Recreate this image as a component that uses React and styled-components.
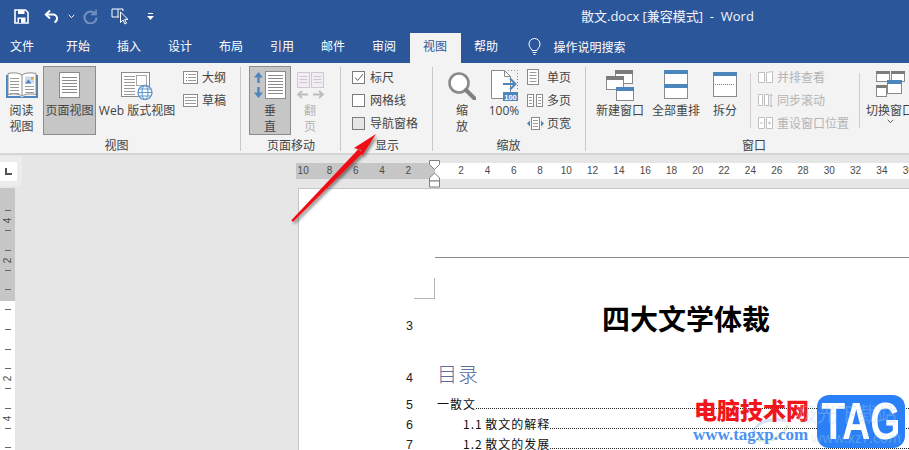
import React from 'react';
import styled, { createGlobalStyle } from 'styled-components';

const UI_FONT = `"Open Sans", "Noto Sans CJK SC", sans-serif`;

const GlobalStyle = createGlobalStyle`
  html, body { margin: 0; padding: 0; height: 100%; overflow: hidden; background: #e6e6e6; }
  * { box-sizing: border-box; }
`;

const Screen = styled.div`
  position: relative;
  width: 909px;
  height: 450px;
  overflow: hidden;
  display: flex;
  flex-direction: column;
  font-family: ${UI_FONT};
  background: #e6e6e6;
`;

/* title bar */
const TitleBar = styled.div`
  height: 33px;
  background: #2b579a;
  color: #fff;
  display: flex;
  align-items: center;
  padding-left: 14px;
`;
const Qat = styled.div`
  width: 567px;
  display: flex;
  align-items: center;
`;
const QatSlot = styled.span`
  display: flex;
  width: ${p => p.$w}px;
  opacity: ${p => (p.$off ? 0.35 : 1)};
`;
const DocTitle = styled.div`
  font-size: 13px;
  white-space: pre;
  color: #f4f6fa;
  margin-top: -3px;
`;

const TabBar = styled.div`
  height: 30px;
  background: #2b579a;
  display: flex;
`;
const Tab = styled.div`
  width: ${p => p.$w || 51}px;
  margin-right: ${p => p.$mr || 0}px;
  text-align: center;
  font-size: 12px;
  line-height: 28px;
  color: ${p => (p.$active ? '#2b579a' : '#fff')};
  background: ${p => (p.$active ? '#f3f3f3' : 'transparent')};
`;
const TellMe = styled.div`
  display: flex;
  align-items: center;
  height: 28px;
  margin-left: 16px;
  gap: 13px;
  color: #fff;
  font-size: 12px;
`;

/* ribbon */
const Ribbon = styled.div`
  height: 92px;
  background: #f3f3f3;
  border-bottom: 2px solid #d6d6d6;
  display: flex;
  flex: none;
`;
const Group = styled.div`
  width: ${p => p.$w}px;
  flex: none;
  display: flex;
  flex-direction: column;
  position: relative;
  &::after {
    content: '';
    position: absolute;
    right: 0;
    top: 4px;
    bottom: 2px;
    width: 1px;
    background: ${p => (p.$last ? 'transparent' : '#c8c8c8')};
  }
`;
const GroupBody = styled.div`
  height: 74px;
  padding: 3px 0 0 ${p => p.$pl || 0}px;
  display: flex;
`;
const GroupLabel = styled.div`
  height: 16px;
  text-align: center;
  font-size: 12px;
  line-height: 18px;
  color: #444;
  padding-right: ${p => p.$pr || 0}px;
`;
const Large = styled.div`
  width: ${p => p.$w}px;
  margin-left: ${p => p.$ml || 0}px;
  height: 69px;
  flex: none;
  display: flex;
  flex-direction: column;
  align-items: center;
  font-size: 12px;
  line-height: 16px;
  white-space: nowrap;
  text-align: center;
  color: ${p => (p.$off ? '#b4b4b4' : '#444')};
  background: ${p => (p.$on ? '#c6c6c6' : 'transparent')};
  outline: ${p => (p.$on ? '1px solid #8c8c8c' : 'none')};
  outline-offset: -1px;
`;
const LargeIcon = styled.div`
  height: 37px;
  padding-top: ${p => p.$pt ?? 5}px;
  display: flex;
  justify-content: center;
  flex: none;
`;
const Stack = styled.div`
  margin-left: ${p => p.$ml || 0}px;
  display: flex;
  flex-direction: column;
  padding-top: 3px;
  gap: 7px;
  flex: none;
`;
const SmallRow = styled.div`
  height: 16px;
  display: flex;
  align-items: center;
  font-size: 12px;
  white-space: nowrap;
  color: ${p => (p.$off ? '#b4b4b4' : '#444')};
`;
const SmallIcon = styled.span`
  width: ${p => p.$w}px;
  flex: none;
  display: flex;
`;
const CheckBox = styled.span`
  width: 13px;
  height: 13px;
  flex: none;
  margin-right: 5px;
  border: 1px solid #7c7c7c;
  background: ${p => (p.$grey ? '#e6e6e6' : '#fff')};
  display: flex;
  align-items: center;
  justify-content: center;
`;
const InnerSep = styled.div`
  width: 1px;
  height: 55px;
  margin: 7px 0 0 ${p => p.$ml}px;
  background: #d0d0d0;
  flex: none;
`;

/* work area */
const Work = styled.div`
  flex: 1;
  min-height: 0;
  display: flex;
  flex-direction: column;
`;
const RulerRow = styled.div`
  height: 33px;
  display: flex;
  flex: none;
`;
const CornerWrap = styled.div`
  width: 22px;
  height: 30px;
  margin-top: 1px;
  background: #ececec;
  padding-top: 6px;
  flex: none;
`;
const Corner = styled.div`
  width: 17px;
  height: 19px;
  background: #fff;
  display: flex;
  align-items: center;
  justify-content: center;
`;
const HRuler = styled.div`
  margin: 8px 0 0 274px;
  height: 16px;
  flex: 1;
  display: flex;
  position: relative;
  font-size: 10px;
  color: #4a4a4a;
  font-family: "Liberation Sans", sans-serif;
`;
const HRulerPart = styled.div`
  height: 16px;
  display: flex;
  flex: ${p => (p.$grey ? 'none' : 1)};
  width: ${p => (p.$grey ? '139px' : 'auto')};
  justify-content: ${p => (p.$grey ? 'flex-end' : 'flex-start')};
  background: ${p => (p.$grey ? '#c6c6c6' : '#fff')};
  padding: ${p => (p.$grey ? '0 13.5px 0 0' : '0 0 0 13px')};
  overflow: hidden;
`;
const HCell = styled.span`
  flex: none;
  width: 26.3px;
  text-align: center;
  line-height: 16px;
`;
const Indent = styled.svg`
  position: absolute;
  left: 132px;
  top: -3px;
`;
const Main = styled.div`
  flex: 1;
  min-height: 0;
  display: flex;
`;
const VRuler = styled.div`
  width: 15px;
  flex: none;
  display: flex;
  flex-direction: column;
  background: linear-gradient(#c6c6c6 0, #c6c6c6 113px, #fff 113px);
  padding-top: 9px;
  font-family: "Liberation Sans", sans-serif;
  font-size: 10px;
  color: #4a4a4a;
`;
const VCell = styled.div`
  height: 39.5px;
  flex: none;
  display: flex;
  flex-direction: column;
  align-items: center;
  padding-top: 13px;
  &::before, &::after {
    content: '';
    width: 6px;
    height: 1px;
    background: #666;
    flex: none;
  }
`;
const VNum = styled.span`
  height: 19px;
  line-height: 19px;
  transform: rotate(-90deg);
  flex: none;
`;
const Desk = styled.div`
  width: 283px;
  flex: none;
`;
const Page = styled.div`
  flex: 1;
  min-width: 0;
  background: #fff;
  border-left: 1px solid #c6c6c6;
  border-top: 1px solid #c6c6c6;
  overflow: hidden;
`;
const HeaderRule = styled.div`
  height: 1px;
  margin: 68px 0 0 136px;
  background: #8a8a8a;
`;
const CropMark = styled.div`
  width: 21px;
  height: 21px;
  margin: 20px 0 0 115px;
  border-right: 1px solid #b4b4b4;
  border-bottom: 1px solid #b4b4b4;
`;
const Line = styled.div`
  display: flex;
  align-items: baseline;
  padding-left: 105px;
  margin-top: ${p => p.$mt || 0}px;
  height: ${p => p.$h}px;
  width: 640px;
`;
const LineNo = styled.span`
  width: 33px;
  flex: none;
  padding-left: 2px;
  font-family: "Liberation Sans", sans-serif;
  font-size: 12.5px;
  color: #222;
`;
const DocTitleText = styled.span`
  width: 498px;
  text-align: center;
  font-family: "Noto Sans CJK SC", sans-serif;
  font-weight: 700;
  font-size: 28px;
  line-height: 34px;
  color: #000;
`;
const TocHeading = styled.span`
  font-family: "Noto Sans CJK SC", sans-serif;
  font-weight: 300;
  font-size: 20px;
  letter-spacing: 1px;
  line-height: 28px;
  color: #5b6f9e;
`;
const TocText = styled.span`
  font-family: "Noto Sans CJK SC", sans-serif;
  font-size: 12px;
  letter-spacing: 1px;
  word-spacing: -1px;
  line-height: 20px;
  color: #111;
  padding-left: ${p => p.$indent || 0}px;
  white-space: nowrap;
`;
const Leader = styled.span`
  flex: 1;
  border-bottom: 1px dotted #222;
  height: 1px;
  align-self: flex-end;
  margin-bottom: 5px;
`;

/* overlays */
const ArrowSvg = styled.svg`
  position: absolute;
  left: 280px;
  top: 120px;
  pointer-events: none;
`;
const Mark = styled.div`
  position: absolute;
  left: 693px;
  top: 395px;
  width: 216px;
  height: 55px;
`;
const MarkRed = styled.div`
  position: absolute;
  left: 1px;
  top: 1px;
  font-family: "Noto Sans CJK SC", sans-serif;
  font-weight: 900;
  font-size: 23px;
  line-height: 26px;
  color: #f0161c;
  white-space: nowrap;
`;
const MarkUrl = styled.div`
  position: absolute;
  left: 0;
  top: 30px;
  font-family: "Liberation Serif", serif;
  font-weight: 700;
  font-size: 17px;
  line-height: 20px;
  color: #4a92f0;
  white-space: nowrap;
`;
const MarkGhost = styled.div`
  position: absolute;
  left: ${p => p.$left}px;
  top: ${p => p.$top}px;
  font-family: "Noto Sans CJK SC", sans-serif;
  font-size: ${p => p.$size}px;
  line-height: 22px;
  color: ${p => p.$c};
  opacity: 0.32;
  white-space: nowrap;
`;
const GhostSwirl = styled.svg`
  position: absolute;
  left: 57px;
  top: 22px;
  opacity: 0.35;
`;
const Badge = styled.div`
  position: absolute;
  left: 124px;
  top: 0;
  width: 88px;
  height: 53px;
  border-radius: 12px;
  background: #2c80f7;
  color: #fff;
  display: flex;
  align-items: center;
  justify-content: center;
  overflow: hidden;
`;
const BadgeText = styled.span`
  font-family: "Liberation Sans", sans-serif;
  font-weight: 700;
  font-size: 51px;
  line-height: 53px;
  transform: scaleX(0.76);
  white-space: nowrap;
`;

/* icons */
const Lines = ({ x, y, w, n, gap = 3, c = '#9a9a9a' }) => (
  <>
    {Array.from({ length: n }, (_, i) => (
      <rect key={i} x={x} y={y + i * gap} width={w} height="1" fill={c} />
    ))}
  </>
);

const SaveIcon = () => (
  <svg width="15" height="15" viewBox="0 0 15 15">
    <path d="M1 1h10.500L14 3.500V14H1z" fill="none" stroke="#fff" strokeWidth="1.600" />
    <rect x="4" y="1" width="6.500" height="4" fill="#fff" />
    <rect x="3.500" y="8.500" width="8" height="5" fill="#fff" />
    <rect x="5" y="10" width="2" height="4" fill="#2b579a" />
  </svg>
);
const UndoIcon = () => (
  <svg width="15" height="15" viewBox="0 0 15 15">
    <path d="M6 1.500 1.800 5.600 6 9.500" fill="none" stroke="#fff" strokeWidth="2" />
    <path d="M2.500 5.600H9a4 4 0 0 1 4 4 4 4 0 0 1-2.500 3.600" fill="none" stroke="#fff" strokeWidth="2" />
  </svg>
);
const RedoIcon = () => (
  <svg width="15" height="15" viewBox="0 0 15 15">
    <path d="M13 .5v5H8" fill="none" stroke="#fff" strokeWidth="1.600" />
    <path d="M12 4.500A6 6 0 1 0 13.500 8.500" fill="none" stroke="#fff" strokeWidth="2" />
  </svg>
);
const TouchIcon = () => (
  <svg width="18" height="17" viewBox="0 0 18 17">
    <path d="M1 1h6v8H1z" fill="none" stroke="#fff" />
    <path d="M7 1h5v2M7 9h1" fill="none" stroke="#fff" />
    <path d="M9.500 4v10.500l2.600-2.500 1.800 4 1.600-.8-1.800-3.800h3.300z" fill="#2b579a" stroke="#fff" />
  </svg>
);
const Chevron = ({ c = '#fff' }) => (
  <svg width="7" height="5" viewBox="0 0 7 5">
    <path d="M.7.8 3.500 3.600 6.300.8" fill="none" stroke={c} />
  </svg>
);
const QatMore = () => (
  <svg width="7" height="8" viewBox="0 0 7 8">
    <rect x="1" y="0" width="5" height="1" fill="#fff" />
    <path d="M0 3h7L3.500 7z" fill="#fff" />
  </svg>
);
const Bulb = () => (
  <svg width="13" height="18" viewBox="0 0 13 18">
    <path d="M4 12.500C3.600 10.500 1 9.500 1 6a5.500 5.500 0 0 1 11 0c0 3.500-2.600 4.500-3 6.500z" fill="none" stroke="#fff" />
    <path d="M4.500 14.500h4M5.500 16.500h2" stroke="#fff" />
  </svg>
);
const BookIcon = () => (
  <svg width="32" height="27" viewBox="0 0 32 27">
    <path d="M0 3h2v21h12l2 1.500 2-1.500h12V3h2v23H0z" fill="#4d86bd" />
    <path d="M2 1.500c5-1 10-1 14 1.500 4-2.500 9-2.500 14-1.500v21c-5-1-10-1-14 1.500-4-2.500-9-2.500-14-1.500z" fill="#fff" stroke="#8a8a8a" />
    <path d="M16 3v20" stroke="#8a8a8a" />
    <Lines x={4} y={6} w={9} n={6} />
    <Lines x={19} y={14} w={9} n={3} />
    <rect x="19" y="4.500" width="9" height="7" fill="#c9dcee" />
    <path d="M19 11.500l3.500-4 3 4z" fill="#4d86bd" />
    <rect x="25" y="5" width="2.500" height="2.500" fill="#e8a33d" />
  </svg>
);
const PageIcon = () => (
  <svg width="21" height="26" viewBox="0 0 21 26">
    <rect x=".5" y=".5" width="20" height="25" fill="#fff" stroke="#8a8a8a" />
    <Lines x={3} y={5} w={15} n={6} c="#8a8a8a" />
  </svg>
);
const WebIcon = () => (
  <svg width="32" height="28" viewBox="0 0 32 28">
    <rect x=".5" y=".5" width="28" height="24" fill="#fff" stroke="#8a8a8a" />
    <Lines x={3} y={4} w={11} n={4} />
    <Lines x={3} y={16} w={11} n={3} />
    <rect x="15.500" y="3.500" width="10" height="10" fill="#fff" stroke="#a8a8a8" />
    <circle cx="24" cy="20.500" r="7" fill="#fff" stroke="#5b95cc" strokeWidth="1.300" />
    <ellipse cx="24" cy="20.500" rx="3" ry="7" fill="none" stroke="#5b95cc" />
    <path d="M17 20.500h14M18 17h12M18 24h12" stroke="#5b95cc" />
  </svg>
);
const OutlineIcon = ({ draft }) => (
  <svg width="15" height="13" viewBox="0 0 15 13">
    <rect x=".5" y=".5" width="14" height="12" fill="#fff" stroke="#8a8a8a" />
    {draft ? <Lines x={2} y={3} w={11} n={3} /> : (
      <>
        <Lines x={5} y={3} w={8} n={3} />
        <rect x="3" y="3" width="1" height="1" fill="#777" />
        <rect x="3" y="6" width="1" height="1" fill="#777" />
        <rect x="3" y="9" width="1" height="1" fill="#777" />
      </>
    )}
  </svg>
);
const VerticalIcon = () => (
  <svg width="32" height="28" viewBox="0 0 32 28">
    <path d="M4.500 1 0 6.500h3.300v5.500h2.400V6.500H9zM4.500 27 0 21.500h3.300V16h2.400v5.500H9z" fill="#4d86bd" />
    <rect x="11.500" y=".5" width="20" height="27" fill="#fff" stroke="#8a8a8a" />
    <Lines x={14} y={4} w={15} n={7} c="#8a8a8a" />
  </svg>
);
const FlipIcon = () => (
  <svg width="27" height="27" viewBox="0 0 27 27">
    <rect x=".5" y=".5" width="12" height="15" fill="#f1edf3" stroke="#cfc8d3" />
    <rect x="14.500" y=".5" width="12" height="15" fill="#f1edf3" stroke="#cfc8d3" />
    <Lines x={2.500} y={4} w={8} n={3} c="#cfc8d3" />
    <Lines x={16.500} y={4} w={8} n={3} c="#cfc8d3" />
    <path d="M5 19 1 22.500 5 26M2 22.500h9M22 19l4 3.500-4 3.500M25 22.500h-9" fill="none" stroke="#bdbdbd" strokeWidth="1.800" />
  </svg>
);
const ZoomIcon = () => (
  <svg width="28" height="28" viewBox="0 0 28 28">
    <circle cx="11" cy="11" r="9.500" fill="#fff" stroke="#8a8a8a" strokeWidth="2.600" />
    <path d="M18 18l8.500 8.500" stroke="#808080" strokeWidth="4" strokeLinecap="round" />
  </svg>
);
const HundredIcon = () => (
  <svg width="27" height="31" viewBox="0 0 27 31">
    <path d="M.5.5h13l6 6v22H.5z" fill="#fff" stroke="#8a8a8a" />
    <path d="M13.500.5v6h6" fill="none" stroke="#8a8a8a" />
    <path d="M17 .5h9.500v20" fill="none" stroke="#8a8a8a" strokeDasharray="1 2" />
    <path d="M12 14h11M19 8.500l5.500 5.500-5.500 5.500" fill="none" stroke="#4d86bd" strokeWidth="2" />
    <rect x="12" y="22" width="15" height="9" fill="#4d86bd" />
    <text x="19.500" y="29.500" fontSize="7.500" fontWeight="700" textAnchor="middle" fill="#fff" fontFamily="Liberation Sans, sans-serif">100</text>
  </svg>
);
const OnePage = () => (
  <svg width="12" height="16" viewBox="0 0 12 16">
    <rect x=".5" y=".5" width="11" height="15" fill="#fff" stroke="#8a8a8a" />
    <Lines x={2.500} y={3} w={7} n={4} gap={3} />
  </svg>
);
const MultiPage = () => (
  <svg width="16" height="13" viewBox="0 0 16 13">
    <rect x=".5" y=".5" width="6" height="12" fill="#fff" stroke="#8a8a8a" />
    <rect x="9.500" y=".5" width="6" height="12" fill="#fff" stroke="#8a8a8a" />
    <Lines x={2} y={3} w={3} n={3} />
    <Lines x={11} y={3} w={3} n={3} />
  </svg>
);
const PageWidth = () => (
  <svg width="17" height="13" viewBox="0 0 17 13">
    <rect x="4.500" y=".5" width="8" height="12" fill="#fff" stroke="#8a8a8a" />
    <Lines x={6} y={3} w={5} n={3} />
    <path d="M3 3.500 0 6.500l3 3zM14 3.500l3 3-3 3z" fill="#4d86bd" />
  </svg>
);
const NewWindow = () => (
  <svg width="29" height="31" viewBox="0 0 29 31">
    <rect x="9.500" y=".5" width="17" height="13" fill="#fff" stroke="#8a8a8a" />
    <rect x="9" y="0" width="18" height="4" fill="#7c7c7c" />
    <rect x=".5" y="6.500" width="17" height="13" fill="#fff" stroke="#8a8a8a" />
    <rect x="0" y="6" width="18" height="4" fill="#7c7c7c" />
    <rect x="10.500" y="17.500" width="17" height="13" fill="#fff" stroke="#8a8a8a" />
    <rect x="10" y="17" width="18" height="4" fill="#4d86bd" />
  </svg>
);
const ArrangeIcon = () => (
  <svg width="24" height="29" viewBox="0 0 24 29">
    <rect x=".5" y=".5" width="23" height="28" fill="#fff" stroke="#8a8a8a" />
    <rect x="0" y="0" width="24" height="4" fill="#4d86bd" />
    <rect x="0" y="14" width="24" height="4" fill="#4d86bd" />
  </svg>
);
const SplitIcon = () => (
  <svg width="24" height="25" viewBox="0 0 24 25">
    <rect x=".5" y=".5" width="23" height="24" fill="#fff" stroke="#8a8a8a" />
    <rect x="0" y="0" width="24" height="4" fill="#4d86bd" />
    <path d="M2 12.500h20" stroke="#4d86bd" strokeDasharray="1 1" />
  </svg>
);
const SideBySide = () => (
  <svg width="15" height="12" viewBox="0 0 15 12">
    <path d="M.5 1.500h6v10h-6zM8.500 1.500l6-1v11h-6z" fill="#fff" stroke="#c0c0c0" />
  </svg>
);
const SyncScroll = () => (
  <svg width="15" height="15" viewBox="0 0 15 15">
    <path d="M.5 1.500h4v11h-4zM6.500 1.500h4v11h-4z" fill="#fff" stroke="#c0c0c0" />
    <path d="M13 1v13M11.500 3 13 1l1.500 2M11.500 12l1.500 2 1.500-2" fill="none" stroke="#c0c0c0" />
  </svg>
);
const ResetPos = () => (
  <svg width="15" height="12" viewBox="0 0 15 12">
    <path d="M.5.500h6v11h-6zM8.500.500h6v11h-6z" fill="#fff" stroke="#c0c0c0" />
    <path d="M2 6h3M10 6h3M11.500 4.500v3" stroke="#c0c0c0" />
  </svg>
);
const SwitchIcon = () => (
  <svg width="29" height="27" viewBox="0 0 29 27">
    <rect x=".5" y=".5" width="13" height="10" fill="#fff" stroke="#8a8a8a" />
    <rect x="0" y="0" width="14" height="3" fill="#7c7c7c" />
    <rect x="15.500" y=".5" width="13" height="10" fill="#fff" stroke="#8a8a8a" />
    <rect x="15" y="0" width="14" height="3" fill="#7c7c7c" />
    <rect x=".5" y="14.500" width="10" height="11" fill="#fff" stroke="#8a8a8a" />
    <rect x="0" y="14" width="11" height="3" fill="#7c7c7c" />
    <rect x="11.500" y="9.500" width="14" height="13" fill="#fff" stroke="#8a8a8a" />
    <rect x="11" y="9" width="15" height="4" fill="#4d86bd" />
  </svg>
);

const TABS = ['开始', '插入', '设计', '布局', '引用', '邮件', '审阅'];
const LEFT_NUMS = [10, 8, 6, 4, 2];
const RIGHT_NUMS = Array.from({ length: 18 }, (_, i) => (i + 1) * 2);
const V_NUMS = ['4', '2', '', '', '2', '4', '6'];

export default function App() {
  return (
    <Screen>
      <GlobalStyle />
      <TitleBar>
        <Qat>
          <QatSlot $w={30}><SaveIcon /></QatSlot>
          <QatSlot $w={24}><UndoIcon /></QatSlot>
          <QatSlot $w={15}><Chevron /></QatSlot>
          <QatSlot $w={28} $off><RedoIcon /></QatSlot>
          <QatSlot $w={36}><TouchIcon /></QatSlot>
          <QatSlot $w={8}><QatMore /></QatSlot>
        </Qat>
        <DocTitle>{'散文.docx [兼容模式]  -  Word'}</DocTitle>
      </TitleBar>

      <TabBar>
        <Tab $w={44} $mr={8.5}>文件</Tab>
        {TABS.map(t => <Tab key={t}>{t}</Tab>)}
        <Tab $active>视图</Tab>
        <Tab>帮助</Tab>
        <TellMe><Bulb />操作说明搜索</TellMe>
      </TabBar>

      <Ribbon>
        <Group $w={241}>
          <GroupBody>
            <Large $w={43}><LargeIcon $pt={6}><BookIcon /></LargeIcon><span>阅读<br />视图</span></Large>
            <Large $w={53} $on><LargeIcon $pt={6}><PageIcon /></LargeIcon>页面视图</Large>
            <Large $w={80} $ml={1}><LargeIcon $pt={6}><WebIcon /></LargeIcon>Web 版式视图</Large>
            <Stack $ml={6}>
              <SmallRow><SmallIcon $w={19}><OutlineIcon /></SmallIcon>大纲</SmallRow>
              <SmallRow><SmallIcon $w={19}><OutlineIcon draft /></SmallIcon>草稿</SmallRow>
            </Stack>
          </GroupBody>
          <GroupLabel $pr={8}>视图</GroupLabel>
        </Group>

        <Group $w={100}>
          <GroupBody $pl={8}>
            <Large $w={42} $on><LargeIcon $pt={5}><VerticalIcon /></LargeIcon>垂<br />直</Large>
            <Large $w={30} $ml={4} $off><LargeIcon $pt={6}><FlipIcon /></LargeIcon>翻<br />页</Large>
          </GroupBody>
          <GroupLabel>页面移动</GroupLabel>
        </Group>

        <Group $w={92}>
          <GroupBody $pl={11}>
            <Stack>
              <SmallRow>
                <CheckBox>
                  <svg width="10" height="9" viewBox="0 0 10 9"><path d="M1 4.500 3.700 7.500 9 1" fill="none" stroke="#666" /></svg>
                </CheckBox>标尺
              </SmallRow>
              <SmallRow><CheckBox />网格线</SmallRow>
              <SmallRow><CheckBox $grey />导航窗格</SmallRow>
            </Stack>
          </GroupBody>
          <GroupLabel>显示</GroupLabel>
        </Group>

        <Group $w={153}>
          <GroupBody $pl={14}>
            <Large $w={30}><LargeIcon $pt={6}><ZoomIcon /></LargeIcon>缩<br />放</Large>
            <Large $w={40} $ml={7}><LargeIcon $pt={4}><HundredIcon /></LargeIcon>100%</Large>
            <Stack $ml={3}>
              <SmallRow><SmallIcon $w={20}><OnePage /></SmallIcon>单页</SmallRow>
              <SmallRow><SmallIcon $w={20}><MultiPage /></SmallIcon>多页</SmallRow>
              <SmallRow><SmallIcon $w={20}><PageWidth /></SmallIcon>页宽</SmallRow>
            </Stack>
          </GroupBody>
          <GroupLabel $pr={2}>缩放</GroupLabel>
        </Group>

        <Group $w={400} $last>
          <GroupBody $pl={8}>
            <Large $w={52}><LargeIcon $pt={4}><NewWindow /></LargeIcon>新建窗口</Large>
            <Large $w={52} $ml={4}><LargeIcon $pt={4}><ArrangeIcon /></LargeIcon>全部重排</Large>
            <Large $w={36} $ml={5}><LargeIcon $pt={6}><SplitIcon /></LargeIcon>拆分</Large>
            <InnerSep $ml={7} />
            <Stack $ml={7}>
              <SmallRow $off><SmallIcon $w={19}><SideBySide /></SmallIcon>并排查看</SmallRow>
              <SmallRow $off><SmallIcon $w={19}><SyncScroll /></SmallIcon>同步滚动</SmallRow>
              <SmallRow $off><SmallIcon $w={19}><ResetPos /></SmallIcon>重设窗口位置</SmallRow>
            </Stack>
            <InnerSep $ml={10} />
            <Large $w={52} $ml={4}>
              <LargeIcon $pt={5}><SwitchIcon /></LargeIcon>切换窗口
              <Chevron c="#555" />
            </Large>
          </GroupBody>
          <GroupLabel $pr={64}>窗口</GroupLabel>
        </Group>
      </Ribbon>

      <Work>
        <RulerRow>
          <CornerWrap>
            <Corner>
              <svg width="7" height="7" viewBox="0 0 7 7"><path d="M1 0v6h6" fill="none" stroke="#555" strokeWidth="2" /></svg>
            </Corner>
          </CornerWrap>
          <HRuler>
            <HRulerPart $grey>{LEFT_NUMS.map(n => <HCell key={n}>{n}</HCell>)}</HRulerPart>
            <HRulerPart>{RIGHT_NUMS.map(n => <HCell key={n}>{n}</HCell>)}</HRulerPart>
            <Indent width="13" height="28" viewBox="0 0 13 28">
              <path d="M1.500.5h10v4l-5 5-5-5z" fill="#fff" stroke="#808080" />
              <path d="M6.500 13l5 5v3h-10v-3z" fill="#fff" stroke="#808080" />
              <path d="M1.500 21h10v6h-10z" fill="#fff" stroke="#808080" />
            </Indent>
          </HRuler>
        </RulerRow>
        <Main>
          <VRuler>
            {V_NUMS.map((n, i) => <VCell key={i}><VNum>{n}</VNum></VCell>)}
          </VRuler>
          <Desk />
          <Page>
            <HeaderRule />
            <CropMark />
            <Line $h={34} $mt={2}>
              <LineNo>3</LineNo>
              <DocTitleText>四大文学体裁</DocTitleText>
            </Line>
            <Line $h={30} $mt={25}>
              <LineNo>4</LineNo>
              <TocHeading>目录</TocHeading>
            </Line>
            <Line $h={20} $mt={4}>
              <LineNo>5</LineNo>
              <TocText>一散文</TocText>
              <Leader />
            </Line>
            <Line $h={20}>
              <LineNo>6</LineNo>
              <TocText $indent={26}>1.1 散文的解释</TocText>
              <Leader />
            </Line>
            <Line $h={20}>
              <LineNo>7</LineNo>
              <TocText $indent={26}>1.2 散文的发展</TocText>
              <Leader />
            </Line>
          </Page>
        </Main>
      </Work>

      <ArrowSvg width="110" height="115" viewBox="0 0 110 115">
        <defs>
          <filter id="arrowShadow" x="-20%" y="-20%" width="150%" height="150%">
            <feDropShadow dx="2" dy="2" stdDeviation="1.500" floodColor="#000" floodOpacity="0.45" />
          </filter>
        </defs>
        <g filter="url(#arrowShadow)">
          <path d="M11.300 100.300 78.500 29 82.500 33 13 102z" fill="#f00f14" />
          <path d="M96 14 74 28 81 30 82 36z" fill="#f00f14" />
        </g>
      </ArrowSvg>

      <Mark>
        <GhostSwirl width="42" height="26" viewBox="0 0 42 26">
          <path d="M3 16C6 4 24 0 36 4" fill="none" stroke="#7fb3e6" strokeWidth="3" />
          <path d="M6 22c12 4 26 0 32-14" fill="none" stroke="#93cf93" strokeWidth="3" />
        </GhostSwirl>
        <MarkRed>电脑技术网</MarkRed>
        <MarkUrl>www.tagxp.com</MarkUrl>
        <Badge><BadgeText>TAG</BadgeText></Badge>
        <MarkGhost $left={104} $top={8} $size={20} $c="#a9cdf6">极光下载站</MarkGhost>
        <MarkGhost $left={118} $top={31} $size={14} $c="#b5dcc4">www.xz7.com</MarkGhost>
      </Mark>
    </Screen>
  );
}
